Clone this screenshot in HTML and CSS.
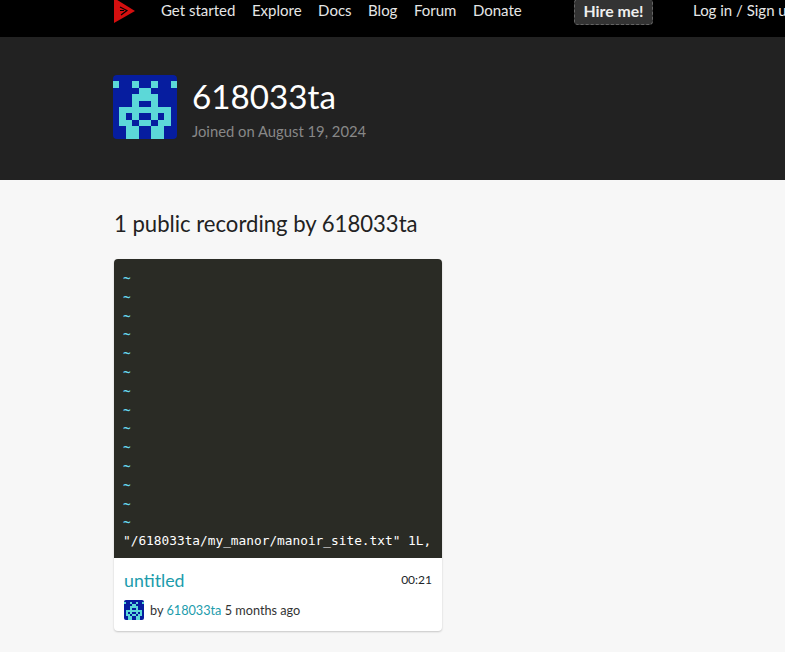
FILE: index.html
```html
<!DOCTYPE html>
<html lang="en">
<head>
<meta charset="utf-8">
<title>618033ta</title>
<link rel="stylesheet" href="styles.css">
</head>
<body>
<header class="topbar">
  <div class="topbar-inner">
    <a class="logo" href="#"><svg width="24" height="26" viewBox="0 0 24 26"><path class="logo-mark" d="M1 -2V23L22 11Z"/><path class="logo-line" d="M7 7L14 10.5L8 15M7 10.5H11"/></svg></a>
    <nav class="nav">
      <a href="#">Get started</a>
      <a href="#">Explore</a>
      <a href="#">Docs</a>
      <a href="#">Blog</a>
      <a href="#">Forum</a>
      <a href="#">Donate</a>
    </nav>
    <a class="hire" href="#">Hire me!</a>
    <a class="login" href="#">Log in / Sign up</a>
  </div>
</header>
<section class="profile">
  <svg class="avatar-lg" viewBox="0 0 10 10" shape-rendering="crispEdges"><rect class="av-bg" width="10" height="10"/><path class="av-fg" d="M0 1h1v1H0zM3 1h1v1H3zM6 1h1v1H6zM9 1h1v1H9zM4 2h2v1H4zM3 3h4v1H3zM3 4h1v1H3zM6 4h1v1H6zM1 5h8v1H1zM1 6h1v1H1zM3 6h1v1H3zM6 6h1v1H6zM8 6h1v1H8zM1 7h2v1H1zM4 7h2v1H4zM7 7h2v1H7zM2 8h2v2H2zM6 8h2v2H6z"/></svg>
  <div class="profile-text">
    <h1>618033ta</h1>
    <p>Joined on August 19, 2024</p>
  </div>
</section>
<main class="content">
  <h2>1 public recording by 618033ta</h2>
  <article class="card">
    <pre class="term"><span class="t">~</span>
<span class="t">~</span>
<span class="t">~</span>
<span class="t">~</span>
<span class="t">~</span>
<span class="t">~</span>
<span class="t">~</span>
<span class="t">~</span>
<span class="t">~</span>
<span class="t">~</span>
<span class="t">~</span>
<span class="t">~</span>
<span class="t">~</span>
<span class="t">~</span>
<b>"/618033ta/my_manor/manoir_site.txt" 1L,</b></pre>
    <div class="card-body">
      <div class="card-title"><a href="#">untitled</a><span>00:21</span></div>
      <div class="card-meta">
        <svg class="avatar-sm" viewBox="0 0 10 10" shape-rendering="crispEdges"><rect class="av-bg" width="10" height="10"/><path class="av-fg" d="M0 1h1v1H0zM3 1h1v1H3zM6 1h1v1H6zM9 1h1v1H9zM4 2h2v1H4zM3 3h4v1H3zM3 4h1v1H3zM6 4h1v1H6zM1 5h8v1H1zM1 6h1v1H1zM3 6h1v1H3zM6 6h1v1H6zM8 6h1v1H8zM1 7h2v1H1zM4 7h2v1H4zM7 7h2v1H7zM2 8h2v2H2zM6 8h2v2H6z"/></svg>
        <span>by <a href="#">618033ta</a> 5 months ago</span>
      </div>
    </div>
  </article>
</main>
</body>
</html>
```
FILE: styles.css
```css
* { box-sizing: border-box; }
html, body { margin: 0; height: 100%; overflow: hidden; }
body { background: #f7f7f7; color: #212529; font-family: Lato, "Liberation Sans", sans-serif; }
a { text-decoration: none; }

.topbar { background: #000; height: 37px; overflow: hidden; }
.topbar-inner { display: flex; align-items: flex-start; padding-left: 113px; white-space: nowrap; }
.topbar-inner > * { flex-shrink: 0; }
.logo { display: block; width: 48px; height: 26px; }
.logo-mark { fill: #d40f0f; }
.logo-line { fill: none; stroke: #000; stroke-width: 1.1; }
.nav { display: flex; gap: 16.5px; width: 360px; }
.nav a, .login { color: #e6e6e6; font-size: 15px; line-height: 20px; }
.hire { margin-left: 53px; width: 79px; height: 26px; margin-top: -1px; text-align: center; background: #333; border: 1px dashed #666; border-radius: 4px; color: #eee; font-weight: 700; font-size: 15.8px; line-height: 22px; }
.login { margin-left: 40px; }

.profile { background: #222; height: 143px; display: flex; align-items: flex-start; padding: 38px 0 0 113px; gap: 15px; }
.avatar-lg { width: 64px; height: 64px; border-radius: 4px; display: block; }
.av-bg { fill: #061d9f; }
.av-fg { fill: #5cd8d8; }
.profile-text { padding-top: 1px; }
.profile-text h1 { margin: 0; color: #fff; font-size: 33.2px; line-height: 40px; font-weight: 400; }
.profile-text p { margin: 5px 0 0; color: #888; font-size: 14.8px; line-height: 20px; }

.content { padding: 29px 0 0 114px; }
h2 { margin: 0 0 21px; font-size: 22.1px; line-height: 29px; font-weight: 400; color: #222; }
.card { width: 328px; background: #fff; border-radius: 4px; overflow: hidden; box-shadow: 0 1px 2px rgba(0,0,0,.2); }
.term { margin: 0; height: 299px; padding: 10px 9px 0; background: #2a2b25; color: #fff; font-family: "DejaVu Sans Mono", "Liberation Mono", monospace; font-size: 12.8px; line-height: 18.8px; overflow: hidden; }
.term b { font-weight: 400; }
.t { color: #66d9ef; font-weight: 700; }
.card-body { padding: 10px; height: 73px; }
.card-title { display: flex; justify-content: space-between; align-items: center; height: 23px; }
.card-title a { color: #1c9cac; font-size: 17.8px; }
.card-title span { font-size: 12px; }
.card-meta { display: flex; align-items: center; gap: 6px; margin-top: 9px; font-size: 12.7px; color: #333; }
.card-meta a { color: #1c9cac; }
.avatar-sm { width: 20px; height: 20px; border-radius: 2px; display: block; }
```
